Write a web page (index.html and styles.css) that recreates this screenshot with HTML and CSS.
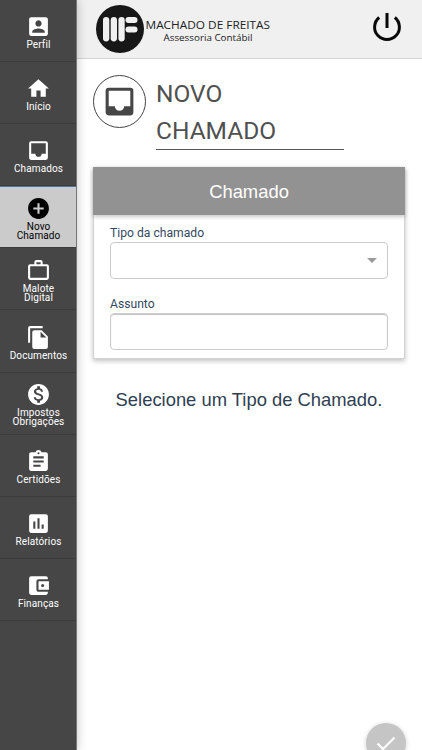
FILE: index.html
```html
<!DOCTYPE html>
<html lang="pt-BR">
<head>
<meta charset="utf-8">
<title>Novo Chamado</title>
<link rel="stylesheet" href="styles.css">
</head>
<body>
<div class="app">
  <nav class="sidebar">
    <a class="item"><svg class="icon" viewBox="0 0 24 24"><path d="M3 5v14c0 1.100.89 2 2 2h14c1.100 0 2-.9 2-2V5c0-1.100-.9-2-2-2H5c-1.110 0-2 .9-2 2zm12 4c0 1.660-1.340 3-3 3s-3-1.340-3-3 1.340-3 3-3 3 1.340 3 3zm-9 8c0-2 4-3.100 6-3.100s6 1.100 6 3.100v1H6v-1z"/></svg><span>Perfil</span></a>
    <a class="item"><svg class="icon" viewBox="0 0 24 24"><path d="M10 20v-6h4v6h5v-8h3L12 3 2 12h3v8z"/></svg><span>Início</span></a>
    <a class="item"><svg class="icon" viewBox="0 0 24 24"><path d="M19 3H5a2 2 0 0 0-2 2v14c0 1.100.9 2 2 2h14a2 2 0 0 0 2-2V5a2 2 0 0 0-2-2zm0 12h-4a3 3 0 0 1-6 0H5V5h14z"/></svg><span>Chamados</span></a>
    <a class="item active"><svg class="icon" viewBox="0 0 24 24"><path d="M12 2C6.480 2 2 6.480 2 12s4.480 10 10 10 10-4.480 10-10S17.520 2 12 2zm5 11h-4v4h-2v-4H7v-2h4V7h2v4h4z"/></svg><span>Novo<br>Chamado</span></a>
    <a class="item"><svg class="icon" viewBox="0 0 24 24"><path fill-rule="evenodd" d="M14 6V4h-4v2zM4 8v11h16V8zm16-2a2 2 0 0 1 2 2v11a2 2 0 0 1-2 2H4a2 2 0 0 1-2-2V8a2 2 0 0 1 2-2h4V4a2 2 0 0 1 2-2h4a2 2 0 0 1 2 2v2z"/></svg><span>Malote<br>Digital</span></a>
    <a class="item"><svg class="icon" viewBox="0 0 24 24"><path d="M16 1H4a2 2 0 0 0-2 2v14h2V3h12zm-1 4 6 6v10a2 2 0 0 1-2 2H8a2 2 0 0 1-2-2V7a2 2 0 0 1 2-2zm-1 7h5.500L14 6.500z"/></svg><span>Documentos</span></a>
    <a class="item"><svg class="icon" viewBox="0 0 24 24"><path d="M12 2C6.480 2 2 6.480 2 12s4.480 10 10 10 10-4.480 10-10S17.520 2 12 2zm1.410 16.090V20h-2.670v-1.930c-1.710-.36-3.160-1.460-3.270-3.400h1.960c.1 1.050.82 1.870 2.650 1.870 1.960 0 2.400-.98 2.400-1.590 0-.83-.44-1.610-2.670-2.140-2.480-.6-4.180-1.620-4.180-3.670 0-1.720 1.390-2.840 3.110-3.210V4h2.670v1.950c1.860.45 2.790 1.860 2.850 3.390H14.300c-.05-1.110-.64-1.870-2.220-1.870-1.500 0-2.400.68-2.400 1.640 0 .84.65 1.390 2.670 1.910s4.180 1.390 4.180 3.910c-.01 1.830-1.380 2.830-3.120 3.160z"/></svg><span>Impostos<br>Obrigações</span></a>
    <a class="item"><svg class="icon" viewBox="0 0 24 24"><path d="M19 3h-4.180C14.400 1.840 13.300 1 12 1s-2.400.84-2.820 2H5a2 2 0 0 0-2 2v14c0 1.100.9 2 2 2h14a2 2 0 0 0 2-2V5a2 2 0 0 0-2-2zm-7 0a1 1 0 1 1 0 2 1 1 0 0 1 0-2zm2 14H7v-2h7zm3-4H7v-2h10zm0-4H7V7h10z"/></svg><span>Certidões</span></a>
    <a class="item"><svg class="icon" viewBox="0 0 24 24"><path d="M19 3H5a2 2 0 0 0-2 2v14c0 1.100.9 2 2 2h14a2 2 0 0 0 2-2V5a2 2 0 0 0-2-2zM9 17H7v-7h2zm4 0h-2V7h2zm4 0h-2v-4h2z"/></svg><span>Relatórios</span></a>
    <a class="item"><svg class="icon" viewBox="0 0 24 24"><path d="M21 18v1a2 2 0 0 1-2 2H5a2 2 0 0 1-2-2V5a2 2 0 0 1 2-2h14a2 2 0 0 1 2 2v1h-9a2 2 0 0 0-2 2v8c0 1.100.89 2 2 2zm-9-2h10V8H12zm4-2.500a1.500 1.500 0 1 1 0-3 1.500 1.500 0 0 1 0 3z"/></svg><span>Finanças</span></a>
  </nav>
  <div class="content">
    <header class="topbar">
      <svg class="logo" viewBox="0 0 180 50">
        <circle cx="24" cy="25" r="24" fill="#171717"/>
        <g fill="#f0f0f0">
          <rect x="7" y="13" width="6.300" height="24.500" rx="3.150"/>
          <rect x="14.700" y="13" width="6.300" height="24.500" rx="3.150"/>
          <rect x="22.400" y="13" width="6.300" height="24.500" rx="3.150"/>
          <rect x="29.500" y="13" width="12" height="6" rx="3"/>
          <rect x="29.500" y="22.500" width="12" height="6" rx="3"/>
        </g>
        <text class="brand" x="49.500" y="25" textLength="124.500" lengthAdjust="spacingAndGlyphs">MACHADO DE FREITAS</text>
        <text class="tagline" x="67.500" y="36.500" textLength="89" lengthAdjust="spacingAndGlyphs">Assessoria Contábil</text>
      </svg>
      <svg class="power" viewBox="0 0 30 30"><path d="M15 1v15M7.200 5.500a12.400 12.400 0 1 0 15.600 0"/></svg>
    </header>
    <main class="main">
      <div class="heading">
        <div class="badge"><svg viewBox="0 0 24 24"><path d="M19 3H5a2 2 0 0 0-2 2v14c0 1.100.9 2 2 2h14a2 2 0 0 0 2-2V5a2 2 0 0 0-2-2zm0 12h-4a3 3 0 0 1-6 0H5V5h14z"/></svg></div>
        <h1>NOVO<br>CHAMADO</h1>
      </div>
      <section class="card">
        <h2>Chamado</h2>
        <div class="fields">
          <label>Tipo da chamado</label>
          <div class="field select"><i class="caret"></i></div>
          <label>Assunto</label>
          <div class="field input"></div>
        </div>
      </section>
      <p class="message">Selecione um Tipo de Chamado.</p>
    </main>
  </div>
  <button class="confirm" aria-label="Confirmar"><svg viewBox="0 0 24 24"><path d="M3.500 12.500 9 18 20.500 6.500"/></svg></button>
</div>
</body>
</html>
```
FILE: styles.css
```css
* { box-sizing: border-box; }
body { margin: 0; font-family: Roboto, sans-serif; background: #fff; }
.app { position: relative; display: flex; height: 750px; overflow: hidden; }
.sidebar {
  width: 77px;
  flex: none;
  z-index: 1;
  background: #464646;
  border-right: 1px solid #777;
  box-shadow: 1px 0 9px rgba(0, 0, 0, .2);
}
.item {
  display: flex;
  flex-direction: column;
  align-items: center;
  justify-content: center;
  gap: 1px;
  height: 62.1px;
  padding: 2px 0 0 1px;
  border-bottom: 1px solid #3c3c3c;
  color: #fff;
  font-size: 10px;
  line-height: 9px;
  letter-spacing: .1px;
  text-align: center;
}
.item.active { padding-top: 1px; background: #cbcbcb; color: #000; border-top: 1px solid #4d73a8; }
.icon { width: 25px; height: 25px; fill: currentColor; }
.content { flex: 1; min-width: 0; }
.topbar {
  display: flex;
  justify-content: space-between;
  align-items: flex-start;
  height: 59px;
  padding: 4px 20px 0 19px;
  background: #f0f0f0;
  border-bottom: 1px solid #d5d5d5;
}
.logo { width: 180px; height: 50px; }
.brand { font: 11.500px "Open Sans", sans-serif; fill: #222; }
.tagline { font: 9.500px "Open Sans", sans-serif; fill: #222; }
.power { width: 30px; height: 30px; margin-top: 8px; fill: none; stroke: #080808; stroke-width: 3; }
.main { padding: 16px 17px 0 16px; }
.heading { display: flex; gap: 10px; height: 92px; }
.badge {
  display: flex;
  align-items: center;
  justify-content: center;
  width: 53px;
  height: 53px;
  border: 1px solid #444;
  border-radius: 50%;
}
.badge svg { width: 37px; height: 37px; fill: #464646; }
h1 {
  width: 188px;
  height: 75px;
  margin: 0;
  border-bottom: 1px solid #555;
  color: #505050;
  font-size: 24.500px;
  font-weight: 400;
  line-height: 37px;
}
.card {
  height: 192px;
  background: #fff;
  border: 1px solid #d2d2d2;
  border-top: 0;
  box-shadow: 0 2px 5px rgba(0, 0, 0, .25);
}
h2 {
  margin: 0 -1px;
  height: 48px;
  background: #929292;
  color: #fff;
  font: 18.400px/49px "Liberation Sans", sans-serif;
  text-align: center;
  box-shadow: 0 2px 4px rgba(0, 0, 0, .22);
}
.fields { padding: 10px 16px 0; color: #34495e; font-size: 12.150px; }
label { display: block; height: 17px; line-height: 16px; }
.field { height: 37px; border: 1px solid #cbcbcb; border-radius: 4px; }
.select {
  display: flex;
  align-items: center;
  justify-content: flex-end;
  margin-bottom: 17px;
  padding-right: 10px;
}
.caret { border: 5px solid transparent; border-top-color: #999; border-bottom: 0; }
.input { box-shadow: inset 0 1px 1px #c4c4c4; }
.message {
  margin: 29px 0 0;
  color: #2f4053;
  font: 18.400px/23px "Liberation Sans", sans-serif;
  text-align: center;
}
.confirm {
  position: absolute;
  z-index: 2;
  left: 366px;
  top: 723px;
  display: flex;
  align-items: center;
  justify-content: center;
  width: 40px;
  height: 40px;
  padding: 0;
  border: 0;
  border-radius: 50%;
  background: #c5c5c5;
  box-shadow: 0 1px 5px rgba(0, 0, 0, .18);
}
.confirm svg { width: 24px; height: 24px; fill: none; stroke: #fff; stroke-width: 2.200; }
```
